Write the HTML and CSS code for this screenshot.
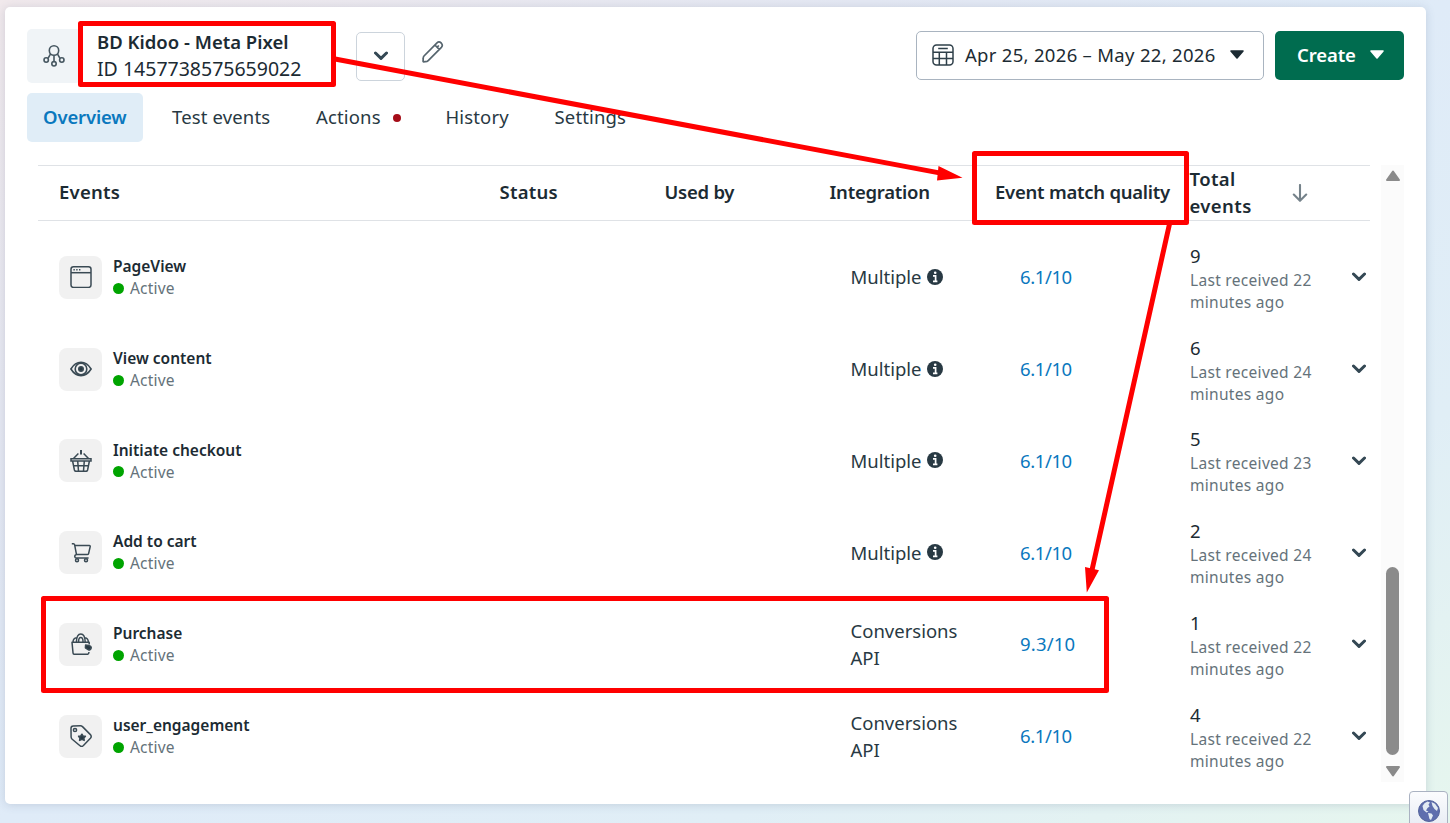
FILE: index.html
```html
<!DOCTYPE html>
<html lang="en">
<head>
    <meta charset="UTF-8">
    <meta name="viewport" content="width=device-width, initial-scale=1.0">
    <title>Events Manager</title>
    <link rel="stylesheet" href="styles.css">
</head>
<body>
    <svg class="sprite">
        <symbol id="chevron" viewBox="0 0 14 10">
            <path d="M1.5 2 L7 7.3 L12.5 2" fill="none" stroke="#344854" stroke-width="3" stroke-linecap="round" stroke-linejoin="round"/>
        </symbol>
        <symbol id="caret" viewBox="0 0 16 10">
            <path d="M2 1 H14 L8 8 Z" fill="currentColor" stroke="currentColor" stroke-width="1.6" stroke-linejoin="round"/>
        </symbol>
        <symbol id="info" viewBox="0 0 16 16">
            <circle cx="8" cy="8" r="8" fill="#283943"/>
            <path d="M6 6.8 H8.6 V12.6 M6 12.4 H10.4" fill="none" stroke="#fff" stroke-width="1.7"/>
            <circle cx="8.2" cy="3.7" r="1.3" fill="#fff"/>
        </symbol>
    </svg>

    <main class="card">
        <header class="header">
            <div class="pixel-icon">
                <svg width="22" height="22" viewBox="0 0 22 22" fill="none" stroke="#465761" stroke-width="1.6">
                    <circle cx="11" cy="5.5" r="4.7"/>
                    <circle cx="3.2" cy="15" r="2.2"/>
                    <circle cx="18.8" cy="15" r="2.2"/>
                    <circle cx="11" cy="18.8" r="2.2"/>
                    <path d="M11 10.2 V16.6 M7.6 8.8 L5 13.4 M14.4 8.8 L17 13.4"/>
                </svg>
            </div>
            <div class="pixel-name">
                <h1>BD Kidoo - Meta Pixel</h1>
                <p>ID 1457738575659022</p>
            </div>
            <button class="switch"><svg width="14" height="10"><use href="#chevron"/></svg></button>
            <svg class="pencil" width="22" height="24" viewBox="0 0 22 24" fill="none" stroke="#56656e" stroke-width="1.7" stroke-linejoin="round">
                <path d="M2 16 L15 2.8 Q17 1 19.2 3 Q21.3 5.3 19.4 7.4 L6.2 20.6 Q5 21.8 3.2 21.7 L1.6 21.8 Q1 21.8 1.1 21 L1.2 18.4 Q1.2 16.9 2 16 Z M12.9 5 L17.2 9.4 M15.2 7.2 L16.8 5.5"/>
            </svg>
            <button class="date">
                <svg width="22" height="22" viewBox="0 0 22 22" fill="none" stroke="#2f404a" stroke-width="1.5">
                    <rect x="1" y="1" width="20" height="20" rx="3.5"/>
                    <path d="M1 8.2 H21 M1 14.4 H21 M7.3 8.2 V21 M14.5 8.2 V21 M6.2 4.6 H15.8"/>
                </svg>
                <span>Apr 25, 2026 – May 22, 2026</span>
                <svg width="16" height="10"><use href="#caret"/></svg>
            </button>
            <button class="create">
                <span>Create</span>
                <svg width="16" height="10"><use href="#caret"/></svg>
            </button>
        </header>

        <nav class="tabs">
            <a class="tab active">Overview</a>
            <a class="tab">Test events</a>
            <a class="tab">Actions <i class="alert"></i></a>
            <a class="tab">History</a>
            <a class="tab">Settings</a>
        </nav>

        <div class="content">
            <section class="table">
                <div class="row head">
                    <span class="spaced">Events</span>
                    <span class="spaced">Status</span>
                    <span>Used by</span>
                    <span>Integration</span>
                    <span>Event match quality</span>
                    <span class="total-head">Total events</span>
                    <svg width="16" height="18" viewBox="0 0 16 18" fill="none" stroke="#75828a" stroke-width="2.1" stroke-linecap="round" stroke-linejoin="round">
                        <path d="M8 1 V16.5 M1.8 10.6 L8 16.8 L14.2 10.6"/>
                    </svg>
                </div>

                <div class="row">
                    <div class="event">
                        <div class="event-icon">
                            <svg width="22" height="22" viewBox="0 0 22 22" fill="none" stroke="#3a4a54" stroke-width="1.5">
                                <rect x="1" y="0.8" width="20" height="20.6" rx="2.5"/>
                                <path d="M1 6.7 H21"/>
                                <path d="M3.4 3.8 H10.5" stroke-dasharray="1.4 1.4"/>
                            </svg>
                        </div>
                        <div><h3>PageView</h3><p><i class="dot"></i>Active</p></div>
                    </div>
                    <div class="integration">Multiple <svg width="16" height="16"><use href="#info"/></svg></div>
                    <a class="score">6.1/10</a>
                    <div class="total"><b>9</b><p>Last received 22 minutes ago</p></div>
                    <svg class="expand" width="14" height="10"><use href="#chevron"/></svg>
                </div>

                <div class="row">
                    <div class="event">
                        <div class="event-icon">
                            <svg width="22" height="22" viewBox="0 0 22 22" fill="none" stroke="#3a4a54" stroke-width="1.6">
                                <path d="M0.9 11 Q5 4.3 11 4.3 Q17 4.3 21.1 11 Q17 17.6 11 17.6 Q5 17.6 0.9 11 Z"/>
                                <circle cx="11" cy="11" r="5.8"/>
                                <circle cx="11" cy="11" r="2.2" fill="#283943"/>
                            </svg>
                        </div>
                        <div><h3>View content</h3><p><i class="dot"></i>Active</p></div>
                    </div>
                    <div class="integration">Multiple <svg width="16" height="16"><use href="#info"/></svg></div>
                    <a class="score">6.1/10</a>
                    <div class="total"><b>6</b><p>Last received 24 minutes ago</p></div>
                    <svg class="expand" width="14" height="10"><use href="#chevron"/></svg>
                </div>

                <div class="row">
                    <div class="event">
                        <div class="event-icon">
                            <svg width="22" height="22" viewBox="0 0 22 22" fill="none" stroke="#3a4a54" stroke-width="1.5">
                                <path d="M1 8.8 H21 V11 H1 Z M2.6 11 L4.4 20 Q4.7 21.3 6 21.3 H16 Q17.3 21.3 17.6 20 L19.4 11 M3.6 15.8 H18.4 M7.7 11 L8.5 21 M14.3 11 L13.5 21 M3.5 8.4 L8.4 3.4 M18.5 8.4 L13.6 3.4"/>
                                <path d="M11 0 V4.4" stroke-width="2"/>
                            </svg>
                        </div>
                        <div><h3>Initiate checkout</h3><p><i class="dot"></i>Active</p></div>
                    </div>
                    <div class="integration">Multiple <svg width="16" height="16"><use href="#info"/></svg></div>
                    <a class="score">6.1/10</a>
                    <div class="total"><b>5</b><p>Last received 23 minutes ago</p></div>
                    <svg class="expand" width="14" height="10"><use href="#chevron"/></svg>
                </div>

                <div class="row">
                    <div class="event">
                        <div class="event-icon">
                            <svg width="22" height="22" viewBox="0 0 22 22" fill="none" stroke="#3a4a54" stroke-width="1.5" stroke-linejoin="round">
                                <path d="M1.8 1.7 H3.4 Q4.4 1.7 4.6 2.7 L6.5 12.6 H17.2 Q18.3 12.6 18.6 11.6 L20.2 4.6 Q20.4 3.6 19.4 3.6 H4.8 M6.5 12.6 Q4.6 13 4.8 14.8 Q5 16 6.4 16 H18.6"/>
                                <circle cx="7" cy="18.3" r="1.5"/>
                                <circle cx="16" cy="18.3" r="1.5"/>
                            </svg>
                        </div>
                        <div><h3>Add to cart</h3><p><i class="dot"></i>Active</p></div>
                    </div>
                    <div class="integration">Multiple <svg width="16" height="16"><use href="#info"/></svg></div>
                    <a class="score">6.1/10</a>
                    <div class="total"><b>2</b><p>Last received 24 minutes ago</p></div>
                    <svg class="expand" width="14" height="10"><use href="#chevron"/></svg>
                </div>

                <div class="row">
                    <div class="event">
                        <div class="event-icon">
                            <svg width="22" height="22" viewBox="0 0 22 22" fill="none" stroke="#3a4a54" stroke-width="1.5" stroke-linejoin="round">
                                <path d="M19.2 11.6 V9.2 H2 L3 19.8 Q3.2 21.3 4.6 21.3 H17.4 Q18.8 21.3 19 19 M3 9 Q3.2 5.2 6.6 4.8 M18.4 9 Q18 5.2 15 4.8 M6.4 9 Q6.6 1 10.8 1 Q15 1 15.2 9 M8.6 8.6 Q8.6 4.6 10.8 4.6 Q13 4.6 13 8.6"/>
                                <path d="M15.6 12 L18.4 12.4 Q21.4 13 21.2 14.8 Q20.8 17 18.6 17 L15.4 14.8 Z" fill="#283943"/>
                            </svg>
                        </div>
                        <div><h3>Purchase</h3><p><i class="dot"></i>Active</p></div>
                    </div>
                    <div class="integration">Conversions API</div>
                    <a class="score wide">9.3/10</a>
                    <div class="total"><b>1</b><p>Last received 22 minutes ago</p></div>
                    <svg class="expand" width="14" height="10"><use href="#chevron"/></svg>
                </div>

                <div class="row">
                    <div class="event">
                        <div class="event-icon">
                            <svg width="22" height="22" viewBox="0 0 22 22" fill="none" stroke="#3a4a54" stroke-width="1.5" stroke-linejoin="round">
                                <path d="M1 3.2 Q1 0.9 3.2 0.9 L10.4 0.8 Q11.6 0.8 12.5 1.6 L20.4 9.6 Q22 11.4 20.4 13.2 L13.2 20.8 Q11.6 22.2 10 20.8 L2.2 14.2 Q1.2 13.2 1.1 12 Z"/>
                                <circle cx="5" cy="5" r="1.6"/>
                                <path d="M11.9 9.2 L13 11 L15.4 11.2 L13.9 13 L14.2 15.4 L12 14.4 L9.6 15.4 L9.9 13 L8.6 11.2 L10.8 11 Z" fill="#283943"/>
                            </svg>
                        </div>
                        <div><h3>user_engagement</h3><p><i class="dot"></i>Active</p></div>
                    </div>
                    <div class="integration">Conversions API</div>
                    <a class="score">6.1/10</a>
                    <div class="total"><b>4</b><p>Last received 22 minutes ago</p></div>
                    <svg class="expand" width="14" height="10"><use href="#chevron"/></svg>
                </div>
            </section>

            <div class="scrollbar">
                <svg width="16" height="12" viewBox="0 0 16 12"><path d="M8 1.6 L14 10 H2 Z" fill="#8b8b8b" stroke="#8b8b8b" stroke-width="2" stroke-linejoin="round"/></svg>
                <div class="thumb"></div>
                <svg width="16" height="12" viewBox="0 0 16 12"><path d="M8 10.4 L14 2 H2 Z" fill="#8b8b8b" stroke="#8b8b8b" stroke-width="2" stroke-linejoin="round"/></svg>
            </div>
        </div>
    </main>

    <!-- callout boxes and arrows -->
    <svg class="callouts" width="1450" height="823" fill="none" stroke="#f00" stroke-width="5" stroke-linejoin="round">
        <rect x="80.5" y="23.5" width="253" height="61"/>
        <rect x="974.5" y="153.5" width="212" height="69"/>
        <rect x="43.5" y="598.5" width="1063" height="92"/>
        <path d="M335 59 L942 173.4 M1169.5 224 L1092 570"/>
        <path d="M962.5 177.7 L938.5 166 L937 180.5 Z M1086.8 592.5 L1085 567 L1099 570.3 Z" fill="#f00" stroke="none"/>
    </svg>

    <button class="globe">
        <svg width="22" height="22" viewBox="0 0 22 22">
            <circle cx="11" cy="11" r="10.5" fill="#5f6eae" stroke="#56659c"/>
            <path d="M4.5 6 Q6 2.5 9.5 1.5 L12 2.5 L10.5 4.5 L11.5 6.5 L9.5 8 L8 10.5 L10.5 11.5 L8.5 12.5 L5.5 10 Z M13.5 2 L17 3.8 L20 8 L19 11 L16.5 9 L14.5 6 Z M10 13 L13.5 13.5 L15 15.5 L13 20 L11.5 19 Z" fill="#e3ebf3"/>
        </svg>
    </button>
</body>
</html>
```
FILE: styles.css
```css
* {
    box-sizing: border-box;
}

body {
    margin: 0;
    width: 1450px;
    height: 823px;
    overflow: hidden;
    position: relative;
    padding: 7px 24px 19px 5px;
    font-family: "Noto Sans", sans-serif;
    font-size: 18.5px;
    line-height: 27px;
    color: #1c2b33;
    background: linear-gradient(to bottom right, #f1e9ec 0%, #e4e8f3 30%, #dfebf8 50%, #e0eef6 75%, #e6f6ee 100%);
}

h1, h3, p {
    margin: 0;
}

svg {
    display: block;
    flex-shrink: 0;
}

button {
    font: inherit;
    color: inherit;
    padding: 0;
}

.sprite {
    display: none;
}

.card {
    height: 797px;
    background: #fff;
    border-radius: 5px;
    padding: 22px;
    box-shadow: 0 1px 10px rgba(60, 80, 110, 0.18);
}

/* header */
.header {
    display: flex;
    height: 54px;
    align-items: center;
}

.pixel-icon {
    width: 54px;
    height: 54px;
    border-radius: 5px;
    background: #f0f4f7;
    display: flex;
    align-items: center;
    justify-content: center;
}

.pixel-name {
    width: 259px;
    margin: -2px 0 0 -3px;
    padding-left: 19px;
    background: #fff;
    white-space: nowrap;
}

.pixel-name h1 {
    font-size: 18.5px;
    line-height: 27px;
    font-weight: 600;
}

.pixel-name p {
    font-size: 19.5px;
}

.switch {
    width: 49px;
    height: 49px;
    margin: 0 0 0 19px;
    border: 1px solid #ccd4dc;
    border-radius: 5px;
    background: #fff;
    display: flex;
    align-items: center;
    justify-content: center;
}

.pencil {
    margin: -9px 0 0 17px;
}

.date {
    margin: -2px 0 0 auto;
    width: 348px;
    height: 49px;
    display: flex;
    align-items: center;
    gap: 11px;
    padding-left: 15px;
    border: 1px solid #a9b4c0;
    border-radius: 5px;
    background: #fff;
}

.date span {
    width: 253px;
    margin-top: -2px;
    text-align: left;
    white-space: nowrap;
    letter-spacing: 0.3px;
}

.create {
    width: 129px;
    height: 49px;
    margin: -2px 0 0 11px;
    display: flex;
    align-items: center;
    gap: 13px;
    padding-left: 22px;
    border: none;
    border-radius: 5px;
    background: #006c4f;
    color: #fff;
    font-weight: 600;
    letter-spacing: -0.1px;
}

.create span {
    margin-top: -2px;
}

/* tabs */
.tabs {
    display: grid;
    grid-template-columns: 129px 144px 129.5px 109px 110px;
    margin-top: 10px;
    height: 49px;
}

.tab {
    display: flex;
    align-items: center;
    padding: 0 16px 2px;
    white-space: nowrap;
    letter-spacing: 0.15px;
    color: #283943;
}

.tab.active {
    width: 116px;
    border-radius: 5px;
    background: #e0edf7;
    color: #0a78be;
    font-weight: 600;
    letter-spacing: -0.15px;
}

.alert {
    width: 8px;
    height: 8px;
    margin: 2px 0 0 12px;
    border-radius: 50%;
    background: #a50d18;
}

/* events table */
.content {
    display: flex;
    margin: 23px 0 0 11px;
}

.table {
    width: 1332px;
}

.row {
    display: grid;
    grid-template-columns: 791.5px 169.5px 170px 152px 1fr;
    align-items: center;
    height: 91.75px;
    padding-left: 21px;
}

.row.head {
    grid-template-columns: 440.5px 165px 165px 165.5px 194.5px 102.5px 1fr;
    height: 56px;
    margin-bottom: 10.5px;
    border-top: 1px solid #dfe2e6;
    border-bottom: 1px solid #dfe2e6;
    font-weight: 600;
    letter-spacing: -0.25px;
    white-space: nowrap;
}

.row.head span {
    margin-top: -3px;
}

.row.head .spaced {
    letter-spacing: 0.25px;
}

.row.head .total-head {
    width: 80px;
    margin-top: -2px;
    white-space: normal;
    letter-spacing: 0.4px;
}

.row.head svg {
    margin-top: -1px;
}

.event {
    display: flex;
    align-items: center;
    gap: 11px;
    font-size: 15.5px;
    line-height: 21.5px;
}

.event-icon {
    width: 43px;
    height: 43px;
    border-radius: 8px;
    background: #f1f1f1;
    display: flex;
    align-items: center;
    justify-content: center;
}

.event h3 {
    font-size: 15.5px;
    line-height: 22px;
    font-weight: 600;
}

.event p {
    display: flex;
    align-items: center;
    margin-top: 1px;
    letter-spacing: 0.2px;
    color: #65727a;
}

.dot {
    width: 11px;
    height: 11px;
    margin: 0 6px 1px 0;
    border-radius: 50%;
    background: #00a400;
}

.integration {
    display: flex;
    align-items: center;
    gap: 5px;
    width: 120px;
    margin-top: -1px;
    color: #283943;
}

.score {
    margin-top: -1px;
    color: #0a78be;
    letter-spacing: -0.4px;
}

.score.wide {
    letter-spacing: 0.2px;
}

.total b {
    display: block;
    font-weight: 400;
}

.total p {
    width: 135px;
    font-size: 15.5px;
    line-height: 22px;
    letter-spacing: 0.3px;
    color: #65727a;
}

.expand {
    margin-left: 10px;
}

.scrollbar {
    width: 23px;
    height: 617px;
    margin-left: 11px;
    padding: 5px 0;
    display: flex;
    flex-direction: column;
    align-items: center;
    background: #fbfbfb;
}

.thumb {
    width: 13px;
    height: 188px;
    margin: auto 0 10px;
    border-radius: 7px;
    background: #8b8b8b;
}

/* things that float over the page */
.callouts {
    position: absolute;
    top: 0;
    left: 0;
}

.globe {
    position: absolute;
    left: 1409px;
    top: 791px;
    width: 39px;
    height: 40px;
    display: flex;
    align-items: center;
    justify-content: center;
    border: 1px solid #aab2c2;
    border-radius: 4px;
    background: linear-gradient(#fbfcfe, #e6eaf3);
}
```
